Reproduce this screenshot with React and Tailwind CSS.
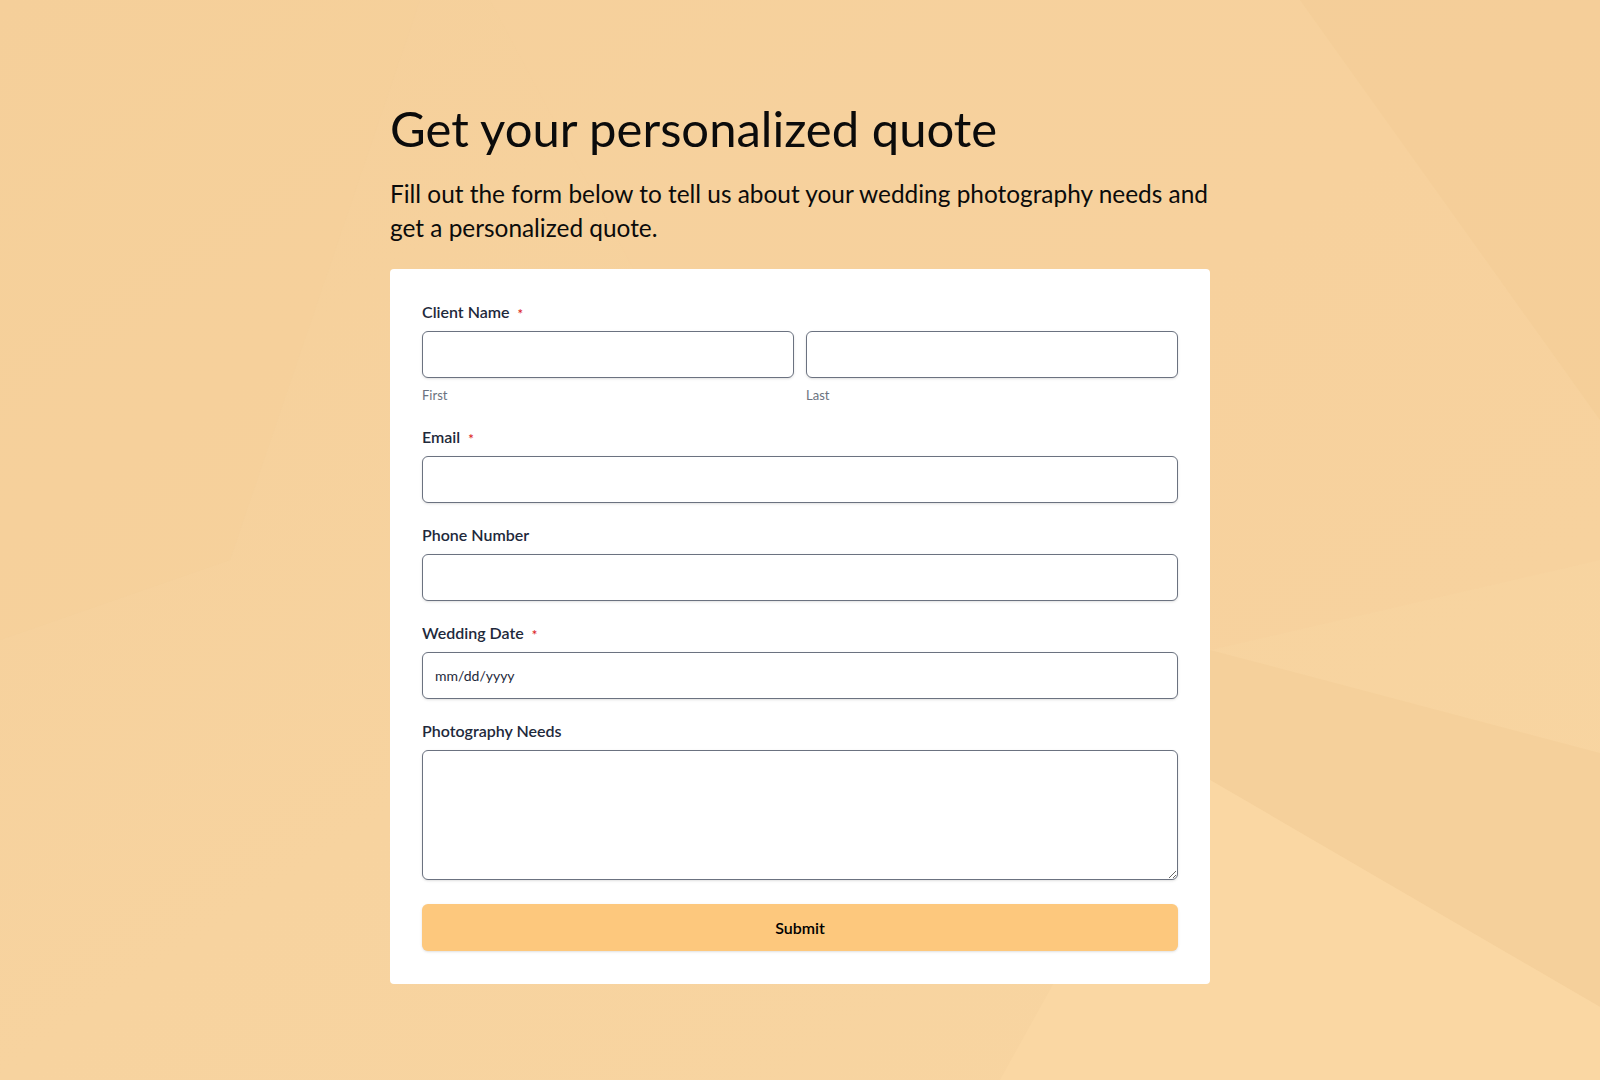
import React from 'react';

// Faceted peach backdrop, drawn once behind the page
const Backdrop = () => (
  <svg
    className="absolute inset-0 h-full w-full"
    viewBox="0 0 1600 1080"
    preserveAspectRatio="none"
    aria-hidden="true"
  >
    <defs>
      <linearGradient id="peach" x1="0" y1="0" x2="1" y2="1">
        <stop offset="0" stopColor="#f5cf9a" />
        <stop offset="0.5" stopColor="#f7d39f" />
        <stop offset="1" stopColor="#f8d5a1" />
      </linearGradient>
    </defs>
    <rect width="1600" height="1080" fill="url(#peach)" />
    <polygon points="490,0 1600,0 1600,560 1210,650 650,300" fill="#f6d19d" opacity="0.6" />
    <polygon points="1300,0 1600,0 1600,420" fill="#f3cd97" opacity="0.7" />
    <polygon points="650,300 1210,650 1210,780 560,560" fill="#f8d5a1" opacity="0.5" />
    <polygon points="1210,650 1600,753 1600,1007 1210,780" fill="#f5d09b" />
    <polygon points="1210,780 1600,1007 1600,1080 1000,1080 1100,900" fill="#fad7a3" />
    <polygon points="0,0 420,0 230,560 0,640" fill="#f5cf9a" opacity="0.5" />
  </svg>
);

const Req = () => (
  <span className="ml-2 inline-block translate-y-[2px] text-[13px] leading-none text-[#dc2626]">*</span>
);

const Label = ({ children, required }) => (
  <label className="mb-[7px] flex items-center text-base leading-6 font-semibold text-[#1e293b]">
    {children}
    {required && <Req />}
  </label>
);

const inputCls =
  'block h-[47px] w-full rounded-md border border-[#6b7280] bg-white px-3 text-sm text-[#1e293b] shadow-sm outline-none';

const App = () => {
  return (
    <div className="relative min-h-screen overflow-hidden font-['Lato',sans-serif]">
      <Backdrop />
      <div className="relative mx-auto w-[820px] pt-[99px] pb-[96px]">
        <h1 className="mb-5 text-[49px] leading-[58px] font-normal text-[#0b0b0b]">
          Get your personalized quote
        </h1>
        <p className="mb-6 text-[24.4px] leading-[34px] text-[#0b0b0b]">
          Fill out the form below to tell us about your wedding photography needs and get a
          personalized quote.
        </p>

        <form
          className="flex flex-col gap-5 rounded bg-white px-8 pt-[31px] pb-[33px]"
          onSubmit={(e) => e.preventDefault()}
        >
          <div>
            <Label required>Client Name</Label>
            <div className="grid grid-cols-2 gap-3">
              <div>
                <input type="text" className={inputCls} />
                <div className="mt-[7px] text-[13px] leading-5 text-[#6b7280]">First</div>
              </div>
              <div>
                <input type="text" className={inputCls} />
                <div className="mt-[7px] text-[13px] leading-5 text-[#6b7280]">Last</div>
              </div>
            </div>
          </div>

          <div>
            <Label required>Email</Label>
            <input type="email" className={inputCls} />
          </div>

          <div>
            <Label>Phone Number</Label>
            <input type="tel" className={inputCls} />
          </div>

          <div>
            <Label required>Wedding Date</Label>
            <input
              type="text"
              placeholder="mm/dd/yyyy"
              className={inputCls + ' placeholder:text-[#1e293b]'}
            />
          </div>

          <div>
            <Label>Photography Needs</Label>
            <textarea className="block h-[130px] w-full resize-y rounded-md border border-[#6b7280] bg-white px-3 py-2 text-sm shadow-sm outline-none" />
          </div>

          <button
            type="submit"
            className="mt-1 h-[47px] w-full rounded-md bg-[#fdc87d] text-base font-semibold text-black shadow-sm"
          >
            Submit
          </button>
        </form>
      </div>
    </div>
  );
};

export default App;
